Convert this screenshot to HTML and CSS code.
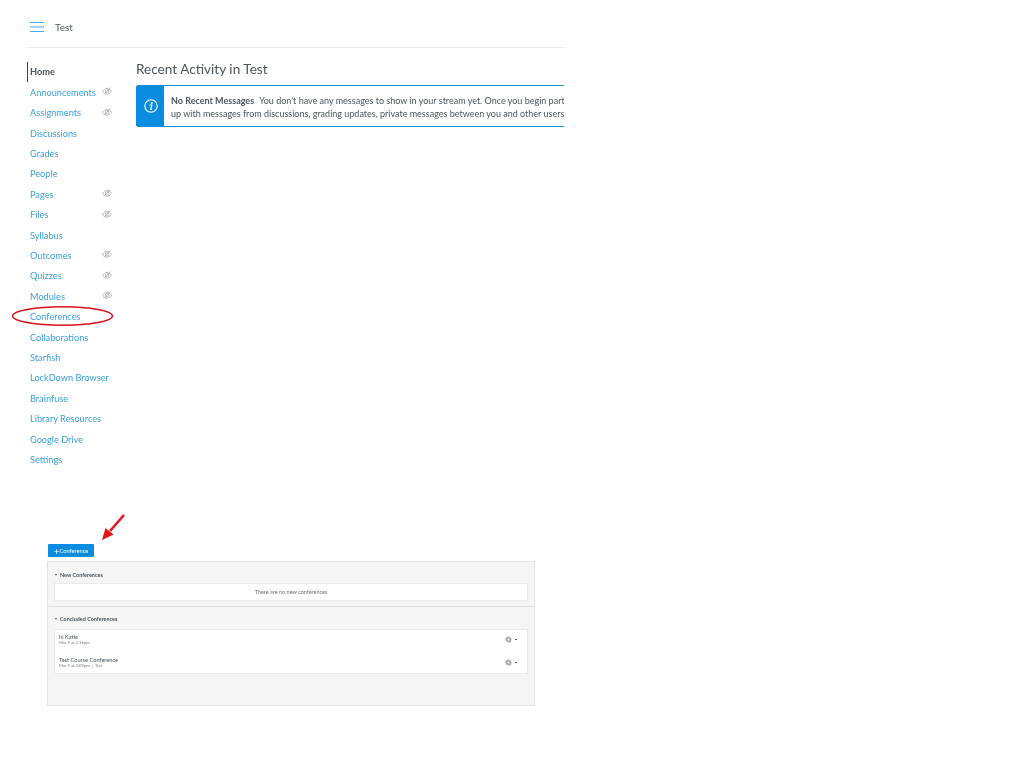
FILE: index.html
```html
<!DOCTYPE html>
<html lang="en">
<head>
<meta charset="utf-8">
<title>Test</title>
<link rel="stylesheet" href="styles.css">
</head>
<body>
<svg class="defs" width="0" height="0" aria-hidden="true">
  <symbol id="eye" viewBox="0 0 10 10">
    <path d="M.5 5.600C2 3.200 3.500 2.400 5 2.400s3 .8 4.500 2.800C8 7.400 6.500 8.200 5 8.200S2 7.600.5 5.600Z" fill="none" stroke="currentColor" stroke-width=".8"/>
    <circle cx="5" cy="5.300" r="1.700" fill="none" stroke="currentColor" stroke-width=".8"/>
    <path d="M1.600 8.400 8.600 1.600" fill="none" stroke="currentColor" stroke-width=".8"/>
  </symbol>
  <symbol id="gear" viewBox="0 0 10 10">
    <path d="M4 .6h2l.3 1.400 1.300-.7 1.300 1.400-.8 1.200 1.400.4v1.900l-1.400.4.8 1.200-1.300 1.400-1.300-.7L6 9.400H4l-.3-1.400-1.300.7-1.300-1.400.8-1.200L.5 5.900V4l1.400-.4-.8-1.200 1.300-1.400 1.300.7Z" fill="currentColor"/>
    <circle cx="5" cy="5" r="1.500" fill="#fff"/>
  </symbol>
</svg>

<section class="course">
  <header class="course-head">
    <svg class="burger" width="14" height="10" viewBox="0 0 14 10" aria-hidden="true">
      <path d="M0 .5h14M0 5h14M0 9.500h14" stroke="#4aa5e2" stroke-width="1" fill="none"/>
    </svg>
    <span class="crumb">Test</span>
  </header>
  <div class="course-body">
    <nav class="side">
      <a class="side-link active">Home</a>
      <a class="side-link">Announcements<svg class="eye"><use href="#eye"/></svg></a>
      <a class="side-link">Assignments<svg class="eye"><use href="#eye"/></svg></a>
      <a class="side-link">Discussions</a>
      <a class="side-link">Grades</a>
      <a class="side-link">People</a>
      <a class="side-link">Pages<svg class="eye"><use href="#eye"/></svg></a>
      <a class="side-link">Files<svg class="eye"><use href="#eye"/></svg></a>
      <a class="side-link">Syllabus</a>
      <a class="side-link">Outcomes<svg class="eye"><use href="#eye"/></svg></a>
      <a class="side-link">Quizzes<svg class="eye"><use href="#eye"/></svg></a>
      <a class="side-link">Modules<svg class="eye"><use href="#eye"/></svg></a>
      <a class="side-link circled">Conferences
        <svg class="ring" width="104" height="22" viewBox="0 0 104 22" aria-hidden="true">
          <ellipse cx="51.500" cy="11" rx="50" ry="9.200" fill="none" stroke="#d5121e" stroke-width="1.500"/>
        </svg>
      </a>
      <a class="side-link">Collaborations</a>
      <a class="side-link">Starfish</a>
      <a class="side-link">LockDown Browser</a>
      <a class="side-link">Brainfuse</a>
      <a class="side-link">Library Resources</a>
      <a class="side-link">Google Drive</a>
      <a class="side-link">Settings</a>
    </nav>
    <main class="activity">
      <h1 class="activity-title">Recent Activity in Test</h1>
      <div class="alert">
        <div class="alert-icon">
          <svg width="14" height="14" viewBox="0 0 14 14" aria-hidden="true">
            <circle cx="7" cy="7" r="6.200" fill="none" stroke="#fff" stroke-width="1.100"/>
            <circle cx="7.900" cy="3.900" r="1" fill="#fff"/>
            <path d="M5.600 6h2.200l-1.100 4.300h1.200" fill="none" stroke="#fff" stroke-width="1.200"/>
          </svg>
        </div>
        <div class="alert-text">
          <p class="alert-line"><b class="alert-head">No Recent Messages</b>You don't have any messages to show in your stream yet. Once you begin participating in your courses you'll see this stream fill</p>
          <p class="alert-line">up with messages from discussions, grading updates, private messages between you and other users, and more.</p>
        </div>
      </div>
    </main>
  </div>
</section>

<section class="conf">
  <svg class="arrow" width="24" height="27" viewBox="0 0 24 27" aria-hidden="true">
    <path d="M23 1 9 17" stroke="#e8141c" stroke-width="2.600" fill="none"/>
    <path d="M1 26 4.500 14 12.500 20.500Z" fill="#e8141c"/>
  </svg>
  <button class="add-btn"><span class="plus">+</span>Conference</button>
  <div class="panel">
    <div class="group group-new">
      <h2 class="group-title"><span class="caret"></span>New Conferences</h2>
      <div class="card empty">There are no new conferences</div>
    </div>
    <div class="group group-old">
      <h2 class="group-title"><span class="caret"></span>Concluded Conferences</h2>
      <div class="card list">
        <div class="row">
          <div class="row-text">
            <div class="row-name">hi Katie</div>
            <div class="row-meta">Mar 9 at 3:16pm</div>
          </div>
          <svg class="gear"><use href="#gear"/></svg><span class="dot"></span>
        </div>
        <div class="row">
          <div class="row-text">
            <div class="row-name">Test Course Conference</div>
            <div class="row-meta">Mar 9 at 3:09pm &nbsp;|&nbsp; Test</div>
          </div>
          <svg class="gear"><use href="#gear"/></svg><span class="dot"></span>
        </div>
      </div>
    </div>
  </div>
</section>
</body>
</html>
```
FILE: styles.css
```css
* { box-sizing: border-box; }
html, body { margin: 0; background: #fff; }
body { font-family: Lato, "Open Sans", sans-serif; color: #3f4a52; }
.defs { position: absolute; }

.course { margin-left: 27px; width: 537px; height: 544px; filter: blur(.3px); }
.course-head {
  height: 48px;
  margin-left: 1px;
  display: flex;
  align-items: center;
  gap: 11px;
  padding: 7px 0 0 2px;
  border-bottom: 1px solid #e8e8e8;
}
.burger { display: block; }
.crumb { font-size: 10px; color: #4f5a62; }
.course-body { display: flex; align-items: flex-start; padding-top: 13.600px; }

.side { width: 109px; flex: none; display: flex; flex-direction: column; }
.side-link {
  height: 20.420px;
  padding-left: 3px;
  padding-right: 22px;
  display: flex;
  align-items: center;
  justify-content: space-between;
  font-size: 9.200px;
  color: #3a9fe0;
  white-space: nowrap;
}
.side-link.active { font-weight: 700; color: #4a5359; border-left: 1px solid #3a4248; padding-left: 2px; }
.side-link.circled { position: relative; }
.eye { width: 10px; height: 10px; margin: -2px 2px 0 0; color: #a8acaf; }
.ring { position: absolute; left: -16px; top: -1px; }

.activity { flex: 1; min-width: 0; overflow: hidden; margin-top: -1px; }
.activity-title { margin: 0; font-size: 13.600px; font-weight: 400; line-height: 17px; color: #4b555c; }
.alert {
  margin-top: 7px;
  height: 42px;
  width: 480px;
  display: flex;
  border: 1.500px solid #0a8de0;
  border-radius: 2px 0 0 2px;
}
.alert-icon { width: 27px; flex: none; background: #0a8de0; display: flex; align-items: center; justify-content: center; }
.alert-text { padding: 8px 0 0 7px; min-width: 0; }
.alert-line { margin: 0; font-size: 9px; line-height: 13.400px; white-space: nowrap; color: #4b555c; }
.alert-head { margin-right: 5px; }

.conf { position: relative; margin-left: 47px; width: 488px; filter: blur(.35px); }
.arrow { position: absolute; left: 54px; top: -30px; }
.add-btn {
  display: flex;
  align-items: center;
  justify-content: center;
  width: 46px;
  height: 13px;
  margin: 0 0 4px 1px;
  padding: 0;
  border: 0;
  border-radius: 1px;
  background: #0a8de0;
  color: #fff;
  font-family: inherit;
  font-size: 5.700px;
}
.plus { font-size: 10px; line-height: 1; }
.panel { height: 145px; background: #f5f5f5; border: 1px solid #e2e2e2; }
.group-new { height: 45px; border-bottom: 1px solid #e0e0e0; padding: 9px 6px 0; }
.group-old { padding: 8px 6px 0; }
.group-title {
  margin: 0 0 4px;
  padding-left: 1px;
  display: flex;
  align-items: center;
  gap: 3px;
  font-size: 5.450px;
  line-height: 8px;
  font-weight: 700;
  color: #4b555c;
}
.caret { width: 0; height: 0; border: 1.500px solid transparent; border-top: 2px solid #4b555c; border-bottom: 0; }
.card { background: #fff; border: 1px solid #eaeaea; }
.empty { height: 18px; font-size: 5.500px; line-height: 16px; text-align: center; color: #6b7379; }
.list { height: 45px; margin-top: 6px; padding: 0 10px 0 4px; }
.row { height: 23px; display: flex; align-items: flex-start; padding-top: 3px; }
.row-text { flex: 1; }
.row-name { font-size: 5.650px; line-height: 7px; color: #4b555c; }
.row-meta { font-size: 4.200px; line-height: 6px; color: #70787e; }
.gear { width: 7px; height: 7px; color: #a9a9a9; margin: 2.500px 3px 0 0; }
.dot { width: 2px; height: 1.500px; background: #555; margin-top: 5.500px; }
```
